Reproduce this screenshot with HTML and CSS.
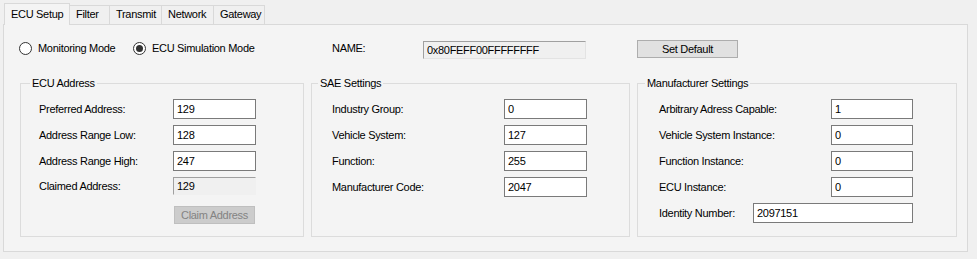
FILE: index.html
```html
<!DOCTYPE html>
<html lang="en">
<head>
    <meta charset="UTF-8">
    <title>ECU Setup</title>
    <link rel="stylesheet" href="styles.css">
</head>
<body>
    <div class="tabs">
        <div class="tab active">ECU Setup</div>
        <div class="tab tab-filter">Filter</div>
        <div class="tab tab-transmit">Transmit</div>
        <div class="tab tab-network">Network</div>
        <div class="tab tab-gateway">Gateway</div>
    </div>

    <div class="page">
        <div class="mode-row">
            <label class="radio radio-monitor"><span class="dot"></span>Monitoring Mode</label>
            <label class="radio radio-sim checked"><span class="dot"></span>ECU Simulation Mode</label>
            <span class="name-label">NAME:</span>
            <input class="box name-box" value="0x80FEFF00FFFFFFFF">
            <button class="btn set-default">Set Default</button>
        </div>

        <div class="groups">
            <fieldset class="group group-ecu">
                <legend>ECU Address</legend>
                <div class="row"><span class="lbl">Preferred Address:</span><input class="box" value="129"></div>
                <div class="row"><span class="lbl">Address Range Low:</span><input class="box" value="128"></div>
                <div class="row"><span class="lbl">Address Range High:</span><input class="box" value="247"></div>
                <div class="row"><span class="lbl">Claimed Address:</span><input class="box readonly" value="129" readonly></div>
                <div class="row btn-row"><button class="btn claim" disabled>Claim Address</button></div>
            </fieldset>

            <fieldset class="group group-sae">
                <legend>SAE Settings</legend>
                <div class="row"><span class="lbl">Industry Group:</span><input class="box" value="0"></div>
                <div class="row"><span class="lbl">Vehicle System:</span><input class="box" value="127"></div>
                <div class="row"><span class="lbl">Function:</span><input class="box" value="255"></div>
                <div class="row"><span class="lbl">Manufacturer Code:</span><input class="box" value="2047"></div>
            </fieldset>

            <fieldset class="group group-man">
                <legend>Manufacturer Settings</legend>
                <div class="row"><span class="lbl">Arbitrary Adress Capable:</span><input class="box" value="1"></div>
                <div class="row"><span class="lbl">Vehicle System Instance:</span><input class="box" value="0"></div>
                <div class="row"><span class="lbl">Function Instance:</span><input class="box" value="0"></div>
                <div class="row"><span class="lbl">ECU Instance:</span><input class="box" value="0"></div>
                <div class="row id-row"><span class="lbl">Identity Number:</span><input class="box wide" value="2097151"></div>
            </fieldset>
        </div>
    </div>
</body>
</html>
```

FILE: styles.css
```css
body {
    font-family: 'Liberation Sans', Arial, sans-serif;
    font-size: 11px;
    letter-spacing: -0.3px;
    color: #000;
    background-color: #f0f0f0;
    margin: 0;
    width: 977px;
    height: 259px;
    overflow: hidden;
}

/* tab strip */
.tabs {
    display: flex;
    align-items: flex-end;
    height: 24px;
    padding-left: 4px;
}

.tab {
    box-sizing: border-box;
    height: 19px;
    line-height: 17px;
    padding: 0 6px;
    border: 1px solid #d9d9d9;
    border-bottom: none;
    border-left: none;
    background-color: #f0f0f0;
    white-space: nowrap;
}

.tab.active {
    width: 66px;
    height: 22px;
    line-height: 21px;
    padding: 0 6px;
    border-left: 1px solid #d9d9d9;
    background-color: #f4f4f4;
    position: relative;
    top: 1px;
    z-index: 1;
}

.tab-filter { width: 40px; }
.tab-transmit { width: 52px; }
.tab-network { width: 52px; }
.tab-gateway { width: 51px; }

.page {
    box-sizing: border-box;
    margin-left: 3px;
    width: 965px;
    height: 228px;
    border: 1px solid #d9d9d9;
    background-color: #f4f4f4;
    padding: 14px 0 0 15px;
}

/* mode row */
.mode-row {
    display: flex;
    align-items: center;
    height: 18px;
}

.radio {
    display: flex;
    align-items: center;
    white-space: nowrap;
}

.radio-monitor { width: 114px; }
.radio-sim { width: 199px; }

.dot {
    box-sizing: border-box;
    width: 13px;
    height: 13px;
    border: 1px solid #333;
    border-radius: 50%;
    background-color: #fff;
    margin-right: 6px;
    display: flex;
    align-items: center;
    justify-content: center;
}

.checked .dot::after {
    content: '';
    width: 7px;
    height: 7px;
    border-radius: 50%;
    background-color: #333;
}

.name-label { width: 91px; }

.box {
    box-sizing: border-box;
    width: 83px;
    height: 20px;
    border: 1px solid #7a7a7a;
    background-color: #fff;
    font: inherit;
    letter-spacing: inherit;
    padding: 0 3px;
    margin: 0;
    outline: none;
}

.name-box {
    width: 163px;
    height: 18px;
    background-color: #f0f0f0;
    border-color: #a0a0a0 #e3e3e3 #e3e3e3 #a0a0a0;
    margin-right: 51px;
    position: relative;
    top: 2px;
}

.btn {
    box-sizing: border-box;
    height: 18px;
    font: inherit;
    letter-spacing: inherit;
    border: 1px solid #adadad;
    background-color: #e1e1e1;
    color: #000;
    padding: 0;
}

.set-default {
    width: 101px;
    position: relative;
    top: 1px;
}

/* group boxes */
.groups {
    display: flex;
    gap: 7px;
    margin-top: 20px;
    padding-left: 1px;
}

.group {
    margin: 0;
    border: 1px solid #dcdcdc;
    padding: 9px 0 7px 18px;
    min-width: 0;
    box-sizing: border-box;
}

.group legend {
    padding: 0 2px;
    margin-left: -9px;
    line-height: 13px;
}

.group-ecu { width: 284px; }
.group-sae { width: 319px; padding-left: 20px; }
.group-man { width: 320px; padding-left: 21px; }

.group-sae legend { margin-left: -14px; }
.group-man legend { margin-left: -14px; }

.row {
    display: flex;
    align-items: center;
    margin-bottom: 6px;
    white-space: nowrap;
}

.lbl { width: 134px; }
.group-sae .lbl,
.group-man .lbl { width: 172px; }
.group-man .id-row .lbl { width: 94px; }

.group-man .box { width: 82px; }
.group-man .box.wide { width: 160px; }
.id-row { margin-top: 3px; }

.box.readonly {
    height: 18px;
    background-color: #f0f0f0;
    border-color: #a0a0a0 #f0f0f0 #f0f0f0 #a0a0a0;
}

.btn-row {
    padding-left: 135px;
    margin: 11px 0 0;
}

.claim {
    width: 81px;
    background-color: #cccccc;
    border-color: #bfbfbf;
    color: #838383;
}
```
